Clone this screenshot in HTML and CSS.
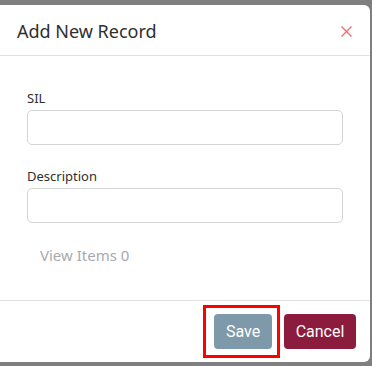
FILE: index.html
```html
<!DOCTYPE html>
<html lang="en">
  <head>
    <meta charset="UTF-8" />
    <meta name="viewport" content="width=device-width, initial-scale=1.0" />
    <title>Add New Record</title>
    <link rel="stylesheet" href="styles.css">
  </head>
  <body>
    <div class="modal">
      <div class="modal-header">
        <h2>Add New Record</h2>
        <button class="close-btn" aria-label="Close">
          <svg width="11" height="11" viewBox="0 0 11 11">
            <path d="M0.5 0.5 L10.5 10.5 M10.5 0.5 L0.5 10.5" stroke="#f26b6b" stroke-width="1.3" fill="none" />
          </svg>
        </button>
      </div>

      <div class="modal-body">
        <div class="field">
          <label for="sil">SIL</label>
          <input type="text" id="sil" class="form-input">
        </div>
        <div class="field">
          <label for="description">Description</label>
          <input type="text" id="description" class="form-input">
        </div>
        <button class="view-items">View Items 0</button>
      </div>

      <div class="modal-footer">
        <span class="highlight">
          <button class="save-btn">Save</button>
        </span>
        <button class="cancel-btn">Cancel</button>
      </div>
    </div>
  </body>
</html>
```

FILE: styles.css
```css
* {
  margin: 0;
  padding: 0;
  box-sizing: border-box;
}

body {
  font-family: 'Noto Sans', 'Open Sans', sans-serif;
  background: #7f7f7f;
  height: 366px;
  overflow: hidden;
}

.modal {
  width: 380px;
  height: 357px;
  margin: 5px 0 0 -10px;
  background: white;
  border-radius: 6px;
  display: flex;
  flex-direction: column;
}

.modal-header {
  height: 51px;
  padding: 0 18px 0 27px;
  border-bottom: 1px solid #dee2e6;
  display: flex;
  align-items: center;
  justify-content: space-between;
}

.modal-header h2 {
  font-size: 18px;
  font-weight: 400;
  color: #2f2f2f;
  padding-top: 2px;
}

.close-btn {
  background: none;
  border: none;
  width: 11px;
  height: 11px;
  display: flex;
  cursor: pointer;
  margin-top: 2px;
}

.modal-body {
  flex: 1;
  padding: 32px 27px 0 37px;
  border-bottom: 1px solid #dee2e6;
}

.field {
  display: flex;
  flex-direction: column;
  margin-bottom: 21px;
}

.field label {
  font-size: 13px;
  line-height: 20px;
  color: #2f2f2f;
  margin-bottom: 2px;
}

.form-input {
  height: 35px;
  border: 1px solid #d3d4d8;
  border-radius: 5px;
  outline: none;
  padding: 0 10px;
}

.view-items {
  background: none;
  border: none;
  font-family: 'Noto Sans', 'Open Sans', sans-serif;
  font-size: 15px;
  color: #a9a9ad;
  margin: 1px 0 0 13px;
}

.modal-footer {
  height: 61px;
  padding: 0 14px 0 0;
  display: flex;
  align-items: center;
  justify-content: flex-end;
  gap: 4px;
}

.highlight {
  border: 3px solid #ff0000;
  padding: 6px 5px 6px 8px;
  display: flex;
}

.save-btn,
.cancel-btn {
  height: 35px;
  border: none;
  border-radius: 4px;
  color: white;
  font-family: Roboto, 'Liberation Sans', sans-serif;
  font-size: 16px;
  cursor: pointer;
}

.save-btn {
  width: 58px;
  background: #7e9aaa;
}

.cancel-btn {
  width: 72px;
  background: #8c1c3e;
}
```
